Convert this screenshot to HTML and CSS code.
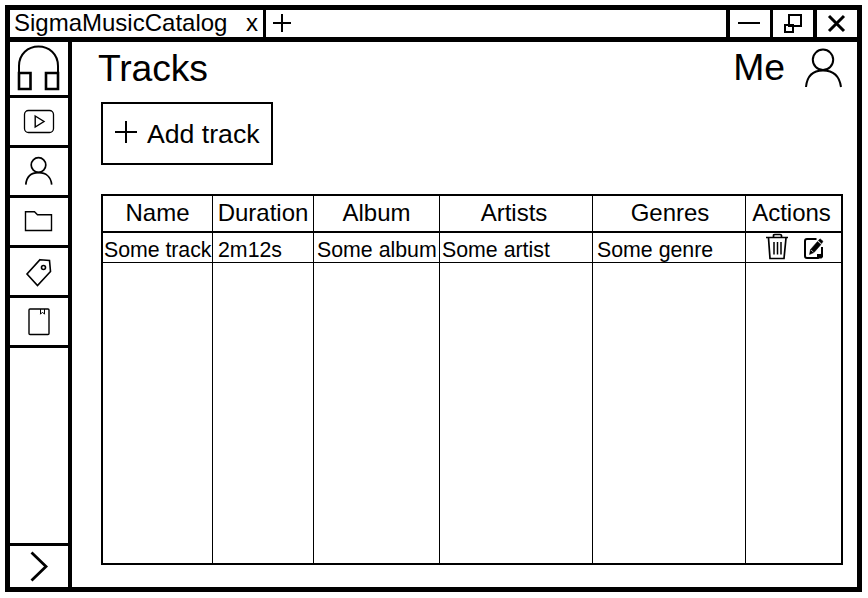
FILE: index.html
```html
<!DOCTYPE html>
<html lang="en">
<head>
<meta charset="utf-8">
<title>SigmaMusicCatalog</title>
<link rel="stylesheet" href="styles.css">
</head>
<body>
<div class="window">
  <header class="titlebar">
    <div class="tab"><span>SigmaMusicCatalog</span><span>x</span></div>
    <div class="newtab"><svg width="18" height="18" viewBox="0 0 18 18"><path d="M0 9H18M9 0V18" stroke-width="2"/></svg></div>
    <div class="control minimize"><svg width="40" height="27" viewBox="0 0 40 27"><path d="M8 13H30" stroke-width="2"/></svg></div>
    <div class="control restore"><svg width="40" height="27" viewBox="0 0 40 27"><path d="M16 5H28V16H16ZM12 15H20V22H12Z" fill="#fff" stroke-width="2"/></svg></div>
    <div class="control close"><svg width="40" height="27" viewBox="0 0 40 27"><path d="M12 6L27 21M27 6L12 21" stroke-width="3"/></svg></div>
  </header>
  <div class="body">
    <nav class="sidebar">
      <div class="item logo"><svg width="58" height="53" viewBox="0 0 58 53"><path d="M9 47V24C9 12 18 4.500 28.500 4.500S48 12 48 24V47" stroke-width="2"/><path d="M9 31H20.500V47H9ZM36 31H48V47H36Z" stroke-width="2.600"/></svg></div>
      <div class="item"><svg width="58" height="47" viewBox="0 0 58 47"><rect x="14.500" y="12.500" width="29" height="22" rx="4" stroke-width="1.300"/><path d="M25.200 18L34 23.500L25.200 29Z" stroke-width="1.400"/></svg></div>
      <div class="item"><svg width="58" height="47" viewBox="0 0 58 47"><circle cx="28.500" cy="17" r="7.300" stroke-width="1.700"/><path d="M15.800 36.700C16.500 29 21 24.700 28.500 24.700S41 29 41.700 36.700" stroke-width="1.700"/></svg></div>
      <div class="item"><svg width="58" height="47" viewBox="0 0 58 47"><path d="M15.500 32.500V13.700H24.500L27.500 16.700H41.500V32.500Z" stroke-width="1.400"/></svg></div>
      <div class="item"><svg width="58" height="47" viewBox="0 0 58 47"><path d="M30 11.700L39.500 12.500L40.500 23.500L27.500 37.500L17 26Z" stroke-width="1.600"/><circle cx="33.500" cy="19.500" r="2" stroke-width="1.600"/></svg></div>
      <div class="item"><svg width="58" height="47" viewBox="0 0 58 47"><rect x="19" y="11" width="20" height="25.500" rx="1" stroke-width="1.400"/><path d="M30.500 11V16.200L32.500 14.200L34.500 16.200V11" stroke-width="1"/></svg></div>
      <div class="spacer"></div>
      <div class="item expand"><svg width="58" height="41" viewBox="0 0 58 41"><path d="M21.500 6.500L36 20.500L21.500 34.500" stroke-width="2.800"/></svg></div>
    </nav>
    <main class="content">
      <div class="heading">
        <h1>Tracks</h1>
        <div class="account"><span>Me</span><svg width="40" height="42" viewBox="0 0 40 42"><circle cx="20" cy="12.800" r="10.200" stroke-width="2"/><path d="M3 40C4 29 9.500 23.500 20 23.500S36.500 29 38 40" stroke-width="2"/></svg></div>
      </div>
      <button class="add"><svg width="22" height="22" viewBox="0 0 22 22"><path d="M0 11H22M11 0V22" stroke-width="2"/></svg><span>Add track</span></button>
      <div class="table">
        <div class="row head"><div>Name</div><div>Duration</div><div>Album</div><div class="artists">Artists</div><div class="genres">Genres</div><div class="last">Actions</div></div>
        <div class="row track"><div>Some track</div><div>2m12s</div><div>Some album</div><div>Some artist</div><div>Some genre</div>
          <div class="actions">
            <svg width="24" height="28" viewBox="0 0 24 28"><path d="M0 4.500H22M7.500 4.500V2.500Q7.500 1.500 9 1.500H14Q15.500 1.500 15.500 2.500V4.500M2.500 5L4 25.500H18L20 5" stroke-width="1.700"/><path d="M8 9V21.500M11.500 9V21.500M15 9V21.500" stroke-width="1.500"/></svg>
            <svg width="21" height="24" viewBox="0 0 21 24"><path d="M12.500 2H3Q1 2 1 4V19Q1 21 3 21H14L18 17V10" stroke-width="2"/><path d="M13 21.500V17H19V20L17.500 21.500Z" fill="#000" stroke="none"/><path d="M5.500 17.500L6.500 12.500L13.500 4.500L17 7.500L10 15.500Z" fill="#000" stroke-width=".5"/><path d="M14.300 3.600L16 1.800L19 4.300L17.700 6.500Z" fill="#000" stroke-width=".5"/><path d="M7 13L9.500 15.200" stroke="#fff" stroke-width=".7"/></svg>
          </div>
        </div>
        <div class="row rest"><div></div><div></div><div></div><div></div><div></div><div></div></div>
      </div>
    </main>
  </div>
</div>
</body>
</html>
```
FILE: styles.css
```css
* { box-sizing: border-box; }
body { margin: 0; padding: 5px; background: #fff; color: #000; font-family: "Liberation Sans", Arial, sans-serif; }
svg { display: block; flex: none; fill: none; stroke: #000; }
.window { width: 857px; height: 587px; border: 5px solid #000; display: flex; flex-direction: column; }
.titlebar { height: 32px; border-bottom: 5px solid #000; display: flex; font-size: 24px; line-height: 26px; }
.tab { width: 256px; border-right: 3px solid #000; padding: 0 5px 0 4px; display: flex; justify-content: space-between; }
.newtab { flex: 1; padding: 4px 7px; }
.control { border-left: 4px solid #000; overflow: hidden; }
.minimize { width: 44px; }
.restore { width: 43px; border-left-width: 3px; }
.close { width: 44px; }
.body { flex: 1; display: flex; min-height: 0; }
.sidebar { width: 62px; border-right: 4px solid #000; display: flex; flex-direction: column; }
.item { height: 50px; border-bottom: 3px solid #000; }
.logo { height: 56px; }
.spacer { flex: 1; }
.expand { height: 44px; border-bottom: 0; border-top: 3px solid #000; }
.content { flex: 1; padding: 0 14px 22px 29px; display: flex; flex-direction: column; }
.heading { height: 60px; display: flex; justify-content: space-between; margin-left: -3px; font-size: 37.33px; line-height: 53px; }
h1 { margin: 0; font: inherit; letter-spacing: -.15px; }
.account { display: flex; gap: 18px; line-height: 51px; }
.account svg { margin-top: 5px; }
.add { width: 172px; height: 63px; border: 2px solid #000; background: none; padding: 0 0 0 12px; display: flex; align-items: center; gap: 10px; color: inherit; font: 26.67px/30px "Liberation Sans", Arial, sans-serif; }
.add svg { margin-bottom: 3px; }
.table { flex: 1; margin-top: 29px; border: 2px solid #000; display: flex; flex-direction: column; }
.row { display: grid; grid-template-columns: 110px 101px 126px 153px 153px 95px; white-space: nowrap; }
.row > div { border-right: 1px solid #000; }
.row > div:last-child { border-right: 0; }
.head { height: 37px; border-bottom: 2px solid #000; font-size: 24px; line-height: 33px; text-align: center; }
.head > .artists { padding-right: 4px; }
.head > .genres { padding-left: 2px; }
.head > .last { padding-right: 4px; }
.track { height: 30px; border-bottom: 1px solid #000; font-size: 21.33px; line-height: 35px; }
.track > div { height: 29px; padding-left: 3px; }
.track > div:first-child { padding-left: 1px; letter-spacing: -.05px; }
.track > div:nth-child(2) { padding-left: 5px; }
.track > div:nth-child(5) { padding-left: 4px; }
.track > div:nth-child(4) { padding-left: 2px; }
.track > .actions { display: flex; gap: 14px; padding-left: 20px; }
.actions svg + svg { margin-top: 4px; }
.rest { flex: 1; }
```
